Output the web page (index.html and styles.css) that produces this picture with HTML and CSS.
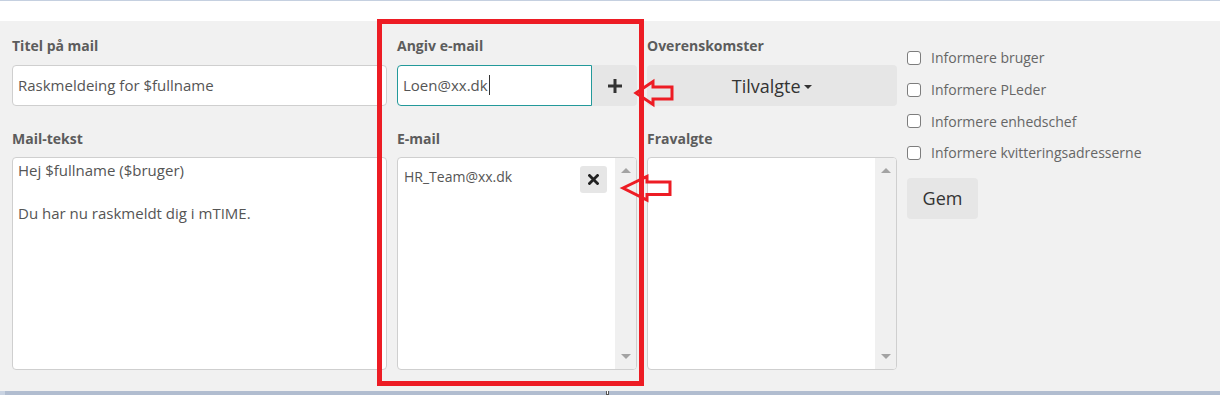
FILE: index.html
```html
<!DOCTYPE html>
<html lang="da">
<head>
<meta charset="utf-8">
<title>Raskmelding mail</title>
<link rel="stylesheet" href="styles.css">
</head>
<body>
<div class="topline"></div>
<div class="topspace"></div>
<div class="panel">
  <div class="col col1">
    <label class="lbl">Titel på mail</label>
    <div class="input">Raskmeldeing for $fullname</div>
    <label class="lbl lbl2">Mail-tekst</label>
    <div class="textarea">Hej $fullname ($bruger)<br><br>Du har nu raskmeldt dig i mTIME.</div>
  </div>
  <div class="col col2">
    <label class="lbl">Angiv e-mail</label>
    <div class="group">
      <div class="input focus">Loen@xx.dk<span class="caret"></span></div>
      <button class="addbtn" type="button">
        <svg width="14" height="14" viewBox="0 0 14 14"><path d="M5.5 0h3v5.5H14v3H8.5V14h-3V8.5H0v-3h5.5z" fill="#333"/></svg>
      </button>
    </div>
    <label class="lbl lbl2">E-mail</label>
    <div class="listbox">
      <div class="listcontent">
        <div class="item"><span>HR_Team@xx.dk</span>
          <button class="xbtn" type="button">
            <svg width="11" height="11" viewBox="0 0 11 11"><path d="M1.5 1.5l8 8M9.5 1.5l-8 8" stroke="#222" stroke-width="2.8" stroke-linecap="square"/></svg>
          </button>
        </div>
      </div>
      <div class="scroll"><span class="up"></span><span class="down"></span></div>
    </div>
  </div>
  <div class="col col3">
    <label class="lbl">Overenskomster</label>
    <button class="dropbtn" type="button">Tilvalgte <span class="dcaret"></span></button>
    <label class="lbl lbl2">Fravalgte</label>
    <div class="listbox">
      <div class="listcontent"></div>
      <div class="scroll"><span class="up"></span><span class="down"></span></div>
    </div>
  </div>
  <div class="col col4">
    <div class="chk"><span class="box"></span>Informere bruger</div>
    <div class="chk"><span class="box"></span>Informere PLeder</div>
    <div class="chk"><span class="box"></span>Informere enhedschef</div>
    <div class="chk"><span class="box"></span>Informere kvitteringsadresserne</div>
    <button class="gem" type="button">Gem</button>
  </div>
</div>
<div class="bottombar"><span class="handle"></span></div>

<svg class="annot" width="1220" height="395" viewBox="0 0 1220 395">
  <rect x="379.5" y="21.5" width="262" height="362" fill="none" stroke="#ed1c24" stroke-width="5"/>
  <path d="M636 93 L653 81.5 L653 87 L672 87 L672 99 L653 99 L653 104.5 Z" fill="none" stroke="#ed1c24" stroke-width="3" stroke-linejoin="miter"/>
  <path d="M623 188 L647 176.5 L647 182 L670 182 L670 194.5 L647 194.5 L647 200 Z" fill="none" stroke="#ed1c24" stroke-width="3" stroke-linejoin="miter"/>
</svg>
</body>
</html>
```

FILE: styles.css
```css
* { box-sizing: border-box; }
html, body { margin: 0; padding: 0; }
body {
  width: 1220px;
  height: 395px;
  overflow: hidden;
  position: relative;
  font-family: "Open Sans", "Noto Sans", sans-serif;
  background: #fff;
}
.topline { height: 1px; background: #c5d0e0; }
.topspace { height: 20px; background: #fff; }
.panel {
  height: 370px;
  background: #f1f1f1;
  display: flex;
  gap: 10px;
  padding: 15px 0 0 12px;
}
.col { display: flex; flex-direction: column; }
.col1 { width: 375px; }
.col2 { width: 240px; }
.col3 { width: 250px; }
.col4 { width: 300px; padding-top: 6px; }

.lbl {
  display: block;
  font-size: 14px;
  font-weight: 700;
  color: #5c5c5c;
  line-height: 20px;
  height: 20px;
  margin-bottom: 9px;
}
.lbl2 { margin-top: 23px; margin-bottom: 8px; }

.input {
  height: 41px;
  background: #fff;
  border: 1px solid #cfcfcf;
  border-radius: 4px;
  padding: 0 5px;
  font-size: 15px;
  color: #555;
  line-height: 39px;
  white-space: nowrap;
}
.group { display: flex; height: 41px; }
.group .input { flex: 1; border-radius: 4px 0 0 4px; }
.input.focus { border-color: #23999a; }
.caret {
  display: inline-block;
  width: 1px;
  height: 20px;
  background: #333;
  vertical-align: -4px;
  margin-left: 1px;
}
.addbtn {
  width: 45px;
  border: 0;
  background: #e6e6e6;
  border-radius: 0 4px 4px 0;
  display: flex;
  align-items: center;
  justify-content: center;
  padding: 0;
}
.textarea {
  height: 213px;
  background: #fff;
  border: 1px solid #cfcfcf;
  border-radius: 4px;
  padding: 2px 5px;
  font-size: 15px;
  line-height: 21.5px;
  color: #555;
}
.listbox {
  height: 213px;
  background: #fff;
  border: 1px solid #cfcfcf;
  border-radius: 4px;
  display: flex;
  overflow: hidden;
}
.listcontent { flex: 1; }
.scroll {
  width: 21px;
  background: #f0f0f0;
  position: relative;
  display: flex;
  flex-direction: column;
  justify-content: space-between;
  align-items: center;
  padding: 10px 0 10px;
}
.up, .down {
  width: 0; height: 0;
  border-left: 5px solid transparent;
  border-right: 5px solid transparent;
}
.up { border-bottom: 5px solid #a3a3a3; }
.down { border-top: 5px solid #a3a3a3; }
.item {
  display: flex;
  justify-content: space-between;
  align-items: flex-start;
  padding: 8px 8px 0 6px;
  font-size: 14px;
  color: #555;
  line-height: 20px;
}
.item span { padding-top: 1px; }
.xbtn {
  width: 27px;
  height: 27px;
  border: 0;
  border-radius: 3px;
  background: #e6e6e6;
  display: flex;
  align-items: center;
  justify-content: center;
  padding: 0;
}
.dropbtn {
  height: 41px;
  border: 0;
  border-radius: 4px;
  background: #e6e6e6;
  font-family: inherit;
  font-size: 18px;
  color: #333;
  padding: 0;
}
.dcaret {
  display: inline-block;
  width: 0; height: 0;
  border-left: 4px solid transparent;
  border-right: 4px solid transparent;
  border-top: 4px solid #333;
  vertical-align: 4px;
  margin-left: -1px;
}
.chk {
  display: flex;
  align-items: center;
  height: 31.7px;
  font-size: 14px;
  color: #666;
}
.box {
  width: 14px;
  height: 14px;
  border: 1.5px solid #7d7d7d;
  border-radius: 3px;
  background: #fff;
  margin-right: 10px;
}
.gem {
  margin-top: 9px;
  width: 71px;
  height: 41px;
  border: 0;
  border-radius: 4px;
  background: #e6e6e6;
  font-family: inherit;
  font-size: 18px;
  color: #333;
  padding: 0;
}
.bottombar {
  height: 4px;
  background: #b1bdd0;
  border-left: 5px solid #c9d3e2;
  position: relative;
}
.handle {
  position: absolute;
  left: 601px;
  top: 0;
  width: 3px;
  height: 4px;
  background: #fff;
  border: 1px solid #555;
  border-top: 0;
}
.annot { position: absolute; left: 0; top: 0; pointer-events: none; }
```
